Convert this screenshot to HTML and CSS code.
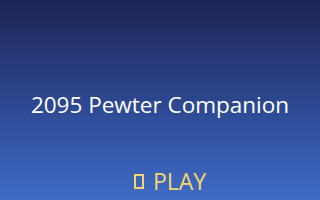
FILE: index.html
```html
<!DOCTYPE html>
<html lang="en">
<head>
    <meta charset="UTF-8">
    <meta name="viewport" content="width=device-width, initial-scale=1.0">
    <title>2095 Pewter Companion</title>
    <link rel="stylesheet" href="styles.css">
</head>
<body>
    <div class="screen">
        <h1 class="title">2095 Pewter Companion</h1>
        <button class="play"><span class="play-icon"></span>PLAY</button>
    </div>
</body>
</html>
```

FILE: styles.css
```css
html, body {
    margin: 0;
    height: 100%;
}
body {
    font-family: "Open Sans", "Noto Sans", Arial, sans-serif;
    background: linear-gradient(to bottom, #1d2455 0%, #2e4a94 55%, #3e6cc6 100%);
    color: #fff;
}
.screen {
    height: 100vh;
    display: grid;
    grid-template-rows: 1fr auto;
    justify-items: center;
}
.title {
    align-self: center;
    margin: 0;
    padding-top: 44px;
    font-size: 22.5px;
    font-weight: 400;
}
.play {
    display: flex;
    align-items: center;
    gap: 9px;
    background: none;
    border: none;
    padding: 0 0 3px 0;
    margin-left: 20px;
    font-family: inherit;
    font-size: 23px;
    color: #f6d46e;
    cursor: pointer;
}
.play-icon {
    width: 6px;
    height: 11px;
    margin-top: 1px;
    border: 2px solid #f6d46e;
}
```
